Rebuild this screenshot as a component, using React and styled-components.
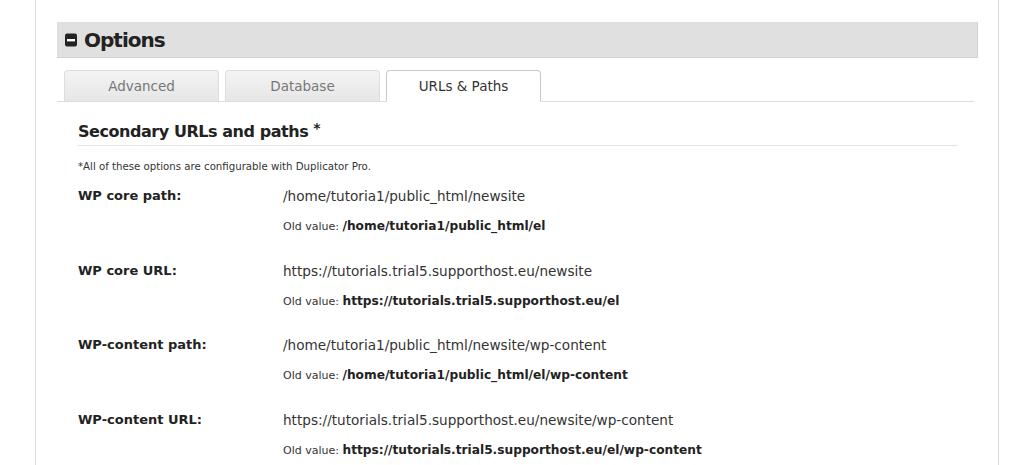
import React, { useState } from 'react'
import styled, { createGlobalStyle } from 'styled-components'

const font = `"DejaVu Sans", Verdana, sans-serif`

const GlobalStyle = createGlobalStyle`
    html, body {
        margin: 0;
        padding: 0;
        background: #fff;
        font-family: ${font};
        color: #333;
    }
`

const Page = styled.div`
    margin: 0 25px 0 35px;
    height: 465px;
    border-left: 1px solid #dcdcdc;
    border-right: 1px solid #dcdcdc;
    padding: 22px 20px 0 21px;
    box-sizing: border-box;
    overflow: hidden;
`

const Header = styled.div`
    display: flex;
    align-items: center;
    gap: 7px;
    height: 36px;
    padding-left: 8px;
    background: #e0e0e0;
    border-right: 1px solid #d2d2d2;
    border-bottom: 1px solid #d2d2d2;
    box-sizing: border-box;
`

const Title = styled.h2`
    margin: 0;
    font: bold 20px ${font};
    letter-spacing: -1px;
    color: #222;
`

const TabBar = styled.div`
    display: flex;
    gap: 6px;
    margin: 12px 4px 0 0;
    padding-left: 7px;
    border-bottom: 1px solid #dedede;
`

const Tab = styled.button`
    width: 155px;
    height: 32px;
    margin-bottom: -1px;
    padding: 0;
    font: 13.5px ${font};
    color: ${props => props.active ? '#333' : '#777'};
    background: ${props => props.active ? '#fff' : 'linear-gradient(#f4f4f4, #e6e6e6)'};
    border: 1px solid ${props => props.active ? '#c8c8c8' : '#dddddd'};
    border-bottom-color: ${props => props.active ? '#fff' : '#dedede'};
    border-radius: 4px 4px 0 0;
    cursor: pointer;
`

const Content = styled.div`
    padding: 0 20px 0 21px;
`

const Heading = styled.h3`
    margin: 20px 0 0;
    padding-bottom: 4px;
    font: bold 16px/19px ${font};
    letter-spacing: -0.45px;
    color: #222;
    border-bottom: 1px solid #e4e4e4;

    sup {
        font-size: 14px;
        vertical-align: 4px;
        line-height: 0;
    }
`

const Note = styled.p`
    margin: 15px 0 0;
    font: 10.2px ${font};
    color: #333;
`

const Row = styled.div`
    display: grid;
    grid-template-columns: 205px 1fr;
    margin-top: ${props => props.first ? '14px' : '25.7px'};
`

const Label = styled.div`
    font: bold 13px ${font};
    color: #222;
    line-height: 20px;
`

const Value = styled.div`
    font: 13.6px ${font};
    color: #333;
    line-height: 20px;
`

const OldValue = styled.div`
    margin-top: 13px;
    height: 16px;
    font: 11px ${font};
    color: #333;
    line-height: 16px;

    b {
        font-size: 12.2px;
        line-height: 1;
        color: #222;
    }
`

const MinusIcon = () => (
    <svg width="12" height="14" viewBox="0 0 12 14">
        <rect x="0" y="0.5" width="12" height="13" rx="2" fill="#222" />
        <rect x="2" y="6" width="8" height="2.4" fill="#fff" />
    </svg>
)

const rows = [
    { label: 'WP core path:', value: '/home/tutoria1/public_html/newsite', old: '/home/tutoria1/public_html/el' },
    { label: 'WP core URL:', value: 'https://tutorials.trial5.supporthost.eu/newsite', old: 'https://tutorials.trial5.supporthost.eu/el' },
    { label: 'WP-content path:', value: '/home/tutoria1/public_html/newsite/wp-content', old: '/home/tutoria1/public_html/el/wp-content' },
    { label: 'WP-content URL:', value: 'https://tutorials.trial5.supporthost.eu/newsite/wp-content', old: 'https://tutorials.trial5.supporthost.eu/el/wp-content' },
]

const tabs = ['Advanced', 'Database', 'URLs & Paths']

const App = () => {
    const [activeTab, setActiveTab] = useState(2)

    return (
        <>
            <GlobalStyle />
            <Page>
                <Header>
                    <MinusIcon />
                    <Title>Options</Title>
                </Header>

                <TabBar>
                    {tabs.map((name, i) => (
                        <Tab key={name} active={i === activeTab} onClick={() => setActiveTab(i)}>
                            {name}
                        </Tab>
                    ))}
                </TabBar>

                <Content>
                    <Heading>Secondary URLs and paths <sup>*</sup></Heading>
                    <Note>*All of these options are configurable with Duplicator Pro.</Note>

                    {rows.map((row, i) => (
                        <Row key={row.label} first={i === 0}>
                            <Label>{row.label}</Label>
                            <div>
                                <Value>{row.value}</Value>
                                <OldValue>Old value: <b>{row.old}</b></OldValue>
                            </div>
                        </Row>
                    ))}
                </Content>
            </Page>
        </>
    )
}

export default App
